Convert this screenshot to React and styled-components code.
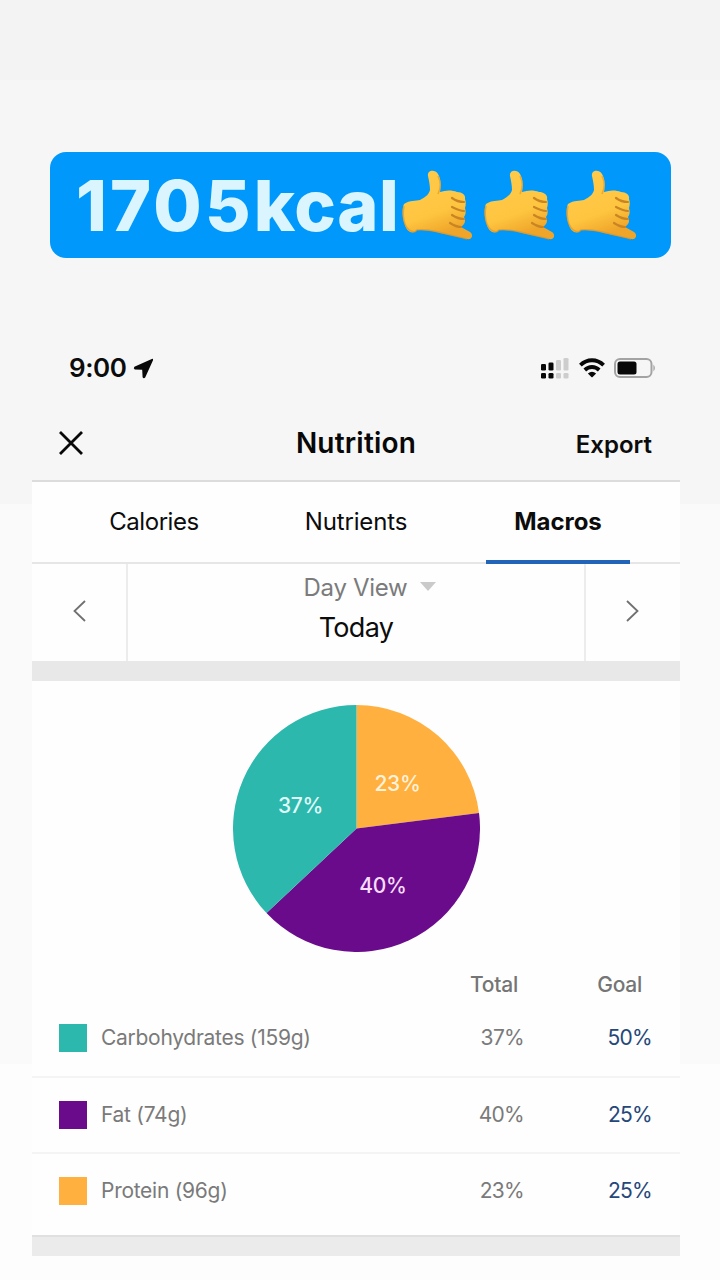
import styled, { createGlobalStyle } from "styled-components";

const GlobalStyle = createGlobalStyle`
  * {
    box-sizing: border-box;
  }

  body {
    margin: 0;
    font-family: Inter, "Liberation Sans", sans-serif;
    color: #0c0c0c;
  }
`;

const Story = styled.div`
  width: 720px;
  height: 1280px;
  overflow: hidden;
  padding: 152px 40px 0 32px;
  background: linear-gradient(
    #f3f3f3 80px,
    #f6f6f6 80px 504px,
    #fafafa 504px 1064px,
    #fdfdfd 1064px
  );
`;

const Banner = styled.div`
  display: flex;
  align-items: center;
  width: 621px;
  height: 106px;
  margin-left: 18px;
  padding-left: 26px;
  border-radius: 16px;
  background: #0099fb;
`;

const BannerText = styled.span`
  width: 320px;
  padding-top: 2px;
  font-size: 70px;
  font-weight: 800;
  line-height: 106px;
  letter-spacing: 0.6px;
  color: #daf5fd;
  white-space: nowrap;
`;

const Digits = styled.span`
  letter-spacing: 3.2px;
`;

const Hands = styled.div`
  display: flex;
  gap: 10px;
  padding: 2px 0 0 6px;
`;

const StatusBar = styled.div`
  display: flex;
  align-items: center;
  justify-content: space-between;
  height: 40px;
  margin-top: 90px;
  padding: 0 24px 0 37px;
`;

const StatusGroup = styled.div`
  display: flex;
  align-items: center;
  gap: ${({ $gap }) => $gap}px;
`;

const Time = styled.span`
  font-size: 26px;
  font-weight: 600;
  line-height: 32px;
  letter-spacing: -0.4px;
`;

const NavBar = styled.header`
  display: grid;
  grid-template-columns: 150px 1fr 150px;
  align-items: center;
  height: 94px;
  padding: 18px 28px 0 27px;
  border-bottom: 2px solid #dcdcdc;
`;

const Title = styled.h1`
  margin: 0;
  padding-left: 1px;
  text-align: center;
  font-size: 28px;
  font-weight: 600;
  letter-spacing: 0.2px;
  color: #080808;
`;

const Export = styled.span`
  padding-top: 2px;
  text-align: right;
  font-size: 24px;
  font-weight: 600;
`;

const Tabs = styled.nav`
  display: flex;
  justify-content: space-between;
  height: 82px;
  padding: 0 50px;
  background: #fefefe;
  border-bottom: 2px solid #e6e6e6;
`;

const Tab = styled.div`
  width: 144px;
  height: 82px;
  line-height: 80px;
  text-align: center;
  font-size: 24px;
  font-weight: ${({ $active }) => ($active ? 700 : 400)};
  letter-spacing: ${({ $spacing }) => $spacing}px;
  border-bottom: 4px solid ${({ $active }) => ($active ? "#2265b8" : "transparent")};
`;

const DayPicker = styled.div`
  display: grid;
  grid-template-columns: 94px 1fr 94px;
  height: 97px;
  background: #fefefe;
`;

const Arrow = styled.div`
  display: flex;
  align-items: center;
  justify-content: center;
  padding-bottom: 3px;
`;

const DayInfo = styled.div`
  display: flex;
  flex-direction: column;
  align-items: center;
  border: solid #ececec;
  border-width: 0 2px;
`;

const DayMode = styled.div`
  display: flex;
  align-items: center;
  gap: 13px;
  height: 46px;
  padding-left: 28px;
  font-size: 24px;
  letter-spacing: -0.3px;
  color: #7b7b7b;
`;

const DayName = styled.div`
  height: 36px;
  font-size: 27px;
  line-height: 36px;
  letter-spacing: -0.7px;
`;

const Band = styled.div`
  height: ${({ $height }) => $height}px;
  background: ${({ $color }) => $color};
  border-top: 2px solid ${({ $edge }) => $edge};
`;

const Panel = styled.section`
  height: 554px;
  background: #fefefe;
`;

const ChartBox = styled.div`
  display: flex;
  justify-content: center;
  padding-top: 24px;
`;

const PieLabel = styled.text`
  font-family: Inter, "Liberation Sans", sans-serif;
  font-size: 21px;
  font-weight: 500;
  letter-spacing: -0.3px;
  text-anchor: middle;
  fill: ${({ $fill }) => $fill};
`;

const TableHead = styled.div`
  display: grid;
  grid-template-columns: 1fr 80px 124px;
  padding-right: 38px;
  height: 48px;
  line-height: 65px;
  text-align: right;
  font-size: 21px;
  font-weight: 500;
  letter-spacing: -0.25px;
  color: #757575;
`;

const Row = styled.div`
  display: grid;
  grid-template-columns: 28px 1fr 100px 128px;
  align-items: center;
  height: ${({ $height }) => $height}px;
  padding: 0 28px 0 27px;
  font-size: 21px;
  line-height: 28px;
  color: #7a7a7a;
  border-bottom: ${({ $last }) => ($last ? "none" : "2px solid #f4f4f4")};
`;

const Swatch = styled.div`
  width: 28px;
  height: 28px;
  background: ${({ $color }) => $color};
`;

const Label = styled.span`
  padding-left: 14px;
  letter-spacing: -0.28px;
`;

const Value = styled.span`
  text-align: right;
  letter-spacing: -0.7px;
`;

const Goal = styled(Value)`
  color: #254779;
`;

const macros = [
  { name: "Carbohydrates", grams: 159, total: 37, goal: 50, color: "#2db8ad" },
  { name: "Fat", grams: 74, total: 40, goal: 25, color: "#6a0b8c" },
  { name: "Protein", grams: 96, total: 23, goal: 25, color: "#ffb03e" },
];

const rowHeights = [78, 76, 74];

const slices = [
  { from: 0, to: 23, color: "#ffb03e", label: "23%", x: 164.5, y: 85.5, fill: "#fff2db" },
  { from: 23, to: 63, color: "#6a0b8c", label: "40%", x: 150, y: 187.5, fill: "#f6dcfa" },
  { from: 63, to: 100, color: "#2db8ad", label: "37%", x: 67.5, y: 107.5, fill: "#e0fbf8" },
];

function slicePath({ from, to }) {
  const r = 123.5;
  const point = (percent) => {
    const angle = (percent / 100) * Math.PI * 2;
    return `${r + r * Math.sin(angle)} ${r - r * Math.cos(angle)}`;
  };
  return `M${r} ${r} L${point(from)} A${r} ${r} 0 0 1 ${point(to)} Z`;
}

function CallMeHand({ id }) {
  return (
    <svg width="72" height="74" viewBox="7 5 72 74">
      <defs>
        <linearGradient id={id} x1="0" y1="0" x2="0.35" y2="1">
          <stop offset="0" stopColor="#ffcb4c" />
          <stop offset="0.7" stopColor="#fec540" />
          <stop offset="1" stopColor="#efa52a" />
        </linearGradient>
      </defs>
      <path
        d="M33 12C32 6 40 5 43 10C46 15 46 21 45 28C51 26 57 26 62 28C67 28 71 31 70 35C71 38 71 41 70 44C71 48 71 50 69 53C71 57 70 60 66 63L75 68C79 71 77 76 72 75L45 69C35 66 28 66 22 66C18 71 12 68 10 61C7 54 7 44 9 40C15 36 21 37 25 36C31 33 34 30 35 26C35 21 34 17 33 12Z"
        fill={`url(#${id})`}
      />
      <path
        d="M9 42C7 52 9 64 16 67C20 69 22 66 22 66C35 65 48 69 72 75"
        fill="none"
        stroke="#de9425"
        strokeWidth="1.5"
        opacity=".65"
      />
      <path
        d="M57 34C61 37 66 38 69 38M57 43C61 45 66 47 69 47M57 51C60 53 65 55 69 55M55 59C58 61 62 63 66 63"
        fill="none"
        stroke="#c98523"
        strokeWidth="2.2"
        strokeLinecap="round"
      />
      <path
        d="M43 12C46 18 46 24 43 30"
        fill="none"
        stroke="#e6a12b"
        strokeWidth="1.5"
        opacity=".8"
      />
    </svg>
  );
}

function LocationIcon() {
  return (
    <svg width="21" height="21" viewBox="0 0 21 21">
      <path
        d="M18.8 1L1.4 8.8Q0 10.4 1.8 11.4L9.2 11.8L9.6 19.2Q10.6 21 12.2 19.6L20 2.2Q20.4.4 18.8 1Z"
        fill="#080808"
      />
    </svg>
  );
}

function SignalIcon() {
  return (
    <svg width="28" height="23" viewBox="0 0 28 23">
      <g fill="#080808">
        <rect x="0" y="7" width="5" height="6.5" rx="1.3" />
        <rect x="0" y="16" width="5" height="5.5" rx="1.3" />
        <rect x="7.5" y="5.5" width="5" height="8" rx="1.3" />
        <rect x="7.5" y="16" width="5" height="5.5" rx="1.3" />
      </g>
      <g fill="#cdcdcd">
        <rect x="15" y="3" width="5" height="10.5" rx="1.3" />
        <rect x="15" y="16" width="5" height="5.5" rx="1.3" />
        <rect x="22.5" y="1" width="5" height="12.5" rx="1.3" />
        <rect x="22.5" y="16" width="5" height="5.5" rx="1.3" />
      </g>
    </svg>
  );
}

function WifiIcon() {
  return (
    <svg width="26" height="20" viewBox="0 0 26 20">
      <g fill="none" stroke="#080808" strokeWidth="3.8">
        <path d="M1.4 7.2C8 .6 18 .6 24.6 7.2" />
        <path d="M5.8 12C10 8 16 8 20.2 12" />
      </g>
      <path d="M8.9 15.4Q13 12.2 17.1 15.4L13.6 18.9Q13 19.4 12.4 18.9Z" fill="#080808" />
    </svg>
  );
}

function BatteryIcon() {
  return (
    <svg width="42" height="20" viewBox="0 0 42 20">
      <rect x="1" y="1" width="36.5" height="18" rx="5" fill="none" stroke="#a3a3a3" strokeWidth="2" />
      <rect x="3.5" y="3.5" width="19" height="13" rx="2.5" fill="#080808" />
      <path d="M39.5 6.5Q42 10 39.5 13.5Z" fill="#909090" />
    </svg>
  );
}

function App() {
  return (
    <>
      <GlobalStyle />
      <Story>
        <Banner>
          <BannerText>
            <Digits>1705</Digits>kcal
          </BannerText>
          <Hands>
            <CallMeHand id="hand-1" />
            <CallMeHand id="hand-2" />
            <CallMeHand id="hand-3" />
          </Hands>
        </Banner>

        <StatusBar>
          <StatusGroup $gap={6}>
            <Time>9:00</Time>
            <LocationIcon />
          </StatusGroup>
          <StatusGroup $gap={9.5}>
            <SignalIcon />
            <WifiIcon />
            <BatteryIcon />
          </StatusGroup>
        </StatusBar>

        <NavBar>
          <svg width="24" height="24" viewBox="0 0 24 24">
            <path d="M1 1L23 23M23 1L1 23" stroke="#080808" strokeWidth="2.8" />
          </svg>
          <Title>Nutrition</Title>
          <Export>Export</Export>
        </NavBar>

        <Tabs>
          <Tab $spacing={-0.45}>Calories</Tab>
          <Tab $spacing={-0.15}>Nutrients</Tab>
          <Tab $active $spacing={-0.05}>
            Macros
          </Tab>
        </Tabs>

        <DayPicker>
          <Arrow>
            <svg width="13" height="22" viewBox="0 0 13 22">
              <path d="M12 1L1.5 11L12 21" fill="none" stroke="#707070" strokeWidth="1.8" />
            </svg>
          </Arrow>
          <DayInfo>
            <DayMode>
              Day View
              <svg width="16" height="10" viewBox="0 0 16 10">
                <path d="M0 0H16L8 9Z" fill="#cacaca" />
              </svg>
            </DayMode>
            <DayName>Today</DayName>
          </DayInfo>
          <Arrow>
            <svg width="14" height="22" viewBox="0 0 14 22">
              <path d="M1 1L11.5 11L1 21" fill="none" stroke="#707070" strokeWidth="1.8" />
            </svg>
          </Arrow>
        </DayPicker>
        <Band $height={20} $color="#e8e8e8" $edge="#e8e8e8" />

        <Panel>
          <ChartBox>
            <svg width="247" height="247" viewBox="0 0 247 247">
              {slices.map((slice) => (
                <path key={slice.label} d={slicePath(slice)} fill={slice.color} />
              ))}
              {slices.map((slice) => (
                <PieLabel key={slice.label} x={slice.x} y={slice.y} $fill={slice.fill}>
                  {slice.label}
                </PieLabel>
              ))}
            </svg>
          </ChartBox>
          <TableHead>
            <span />
            <span>Total</span>
            <span>Goal</span>
          </TableHead>
          {macros.map((macro, i) => (
            <Row key={macro.name} $height={rowHeights[i]} $last={i === 2}>
              <Swatch $color={macro.color} />
              <Label>
                {macro.name} ({macro.grams}g)
              </Label>
              <Value>{macro.total}%</Value>
              <Goal>{macro.goal}%</Goal>
            </Row>
          ))}
        </Panel>
        <Band $height={21} $color="#ebebeb" $edge="#e0e0e0" />
      </Story>
    </>
  );
}

export default App;
